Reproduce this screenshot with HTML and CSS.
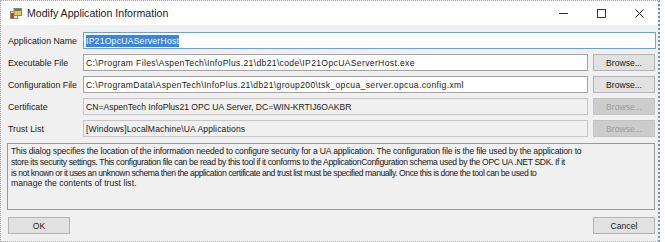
FILE: index.html
```html
<!DOCTYPE html>
<html lang="en">
<head>
  <meta charset="UTF-8" />
  <title>Modify Application Information</title>
  <link rel="stylesheet" href="styles.css">
</head>
<body>
  <div class="ventana">
    <div class="barra-titulo">
      <svg class="icono" width="12" height="11" viewBox="0 0 12 11">
        <rect x="0.5" y="3.5" width="7" height="7" fill="#e8e8e8" stroke="#8a8a8a"/>
        <rect x="1" y="5" width="3" height="5" fill="#d9342b"/>
        <rect x="4" y="0.5" width="7.5" height="7" fill="#f3c53a" stroke="#a88420"/>
        <rect x="4.5" y="1" width="6.5" height="2" fill="#3a7bd5"/>
      </svg>
      <span class="titulo">Modify Application Information</span>
      <div class="controles">
        <span class="ctrl-min"></span>
        <span class="ctrl-max"></span>
        <svg class="ctrl-cerrar" width="9" height="9" viewBox="0 0 9 9">
          <path d="M0.5 0.5 L8.5 8.5 M8.5 0.5 L0.5 8.5" stroke="#222" stroke-width="1"/>
        </svg>
      </div>
    </div>

    <div class="cuerpo">
      <div class="campos">
        <label class="etiqueta">Application Name</label>
        <div class="caja caja-foco ancha"><span class="seleccion">IP21OpcUAServerHost</span></div>

        <label class="etiqueta">Executable File</label>
        <div class="caja ruta">C:\Program Files\AspenTech\InfoPlus.21\db21\code\IP21OpcUAServerHost.exe</div>
        <button class="boton">Browse...</button>

        <label class="etiqueta">Configuration File</label>
        <div class="caja ruta">C:\ProgramData\AspenTech\InfoPlus.21\db21\group200\tsk_opcua_server.opcua.config.xml</div>
        <button class="boton">Browse...</button>

        <label class="etiqueta">Certificate</label>
        <div class="caja caja-off">CN=AspenTech InfoPlus21 OPC UA Server, DC=WIN-KRTIJ6OAKBR</div>
        <button class="boton boton-off">Browse...</button>

        <label class="etiqueta">Trust List</label>
        <div class="caja caja-off lista">[Windows]LocalMachine\UA Applications</div>
        <button class="boton boton-off">Browse...</button>
      </div>

      <div class="descripcion">
        <div class="linea l1">This dialog specifies the location of the information needed to configure security for a UA application. The configuration file is the file used by the application to</div>
        <div class="linea l2">store its security settings. This configuration file can be read by this tool if it conforms to the ApplicationConfiguration schema used by the OPC UA .NET SDK. If it</div>
        <div class="linea l3">is not known or it uses an unknown schema then the application certificate and trust list must be specified manually. Once this is done the tool can be used to</div>
        <div class="linea l4">manage the contents of trust list.</div>
      </div>

      <div class="acciones">
        <button class="boton boton-grande">OK</button>
        <button class="boton boton-grande">Cancel</button>
      </div>
    </div>
  </div>
</body>
</html>
```

FILE: styles.css
```css
body {
  margin: 0;
  padding: 0;
  background-color: white;
  font-family: 'Liberation Sans', Arial, sans-serif;
}

.ventana {
  width: 657px;
  height: 240px;
  border: 1px dotted #a8a8a8;
  border-right: 2px dotted #5b8fd6;
  background-color: #f0f0f0;
  display: flex;
  flex-direction: column;
}

.barra-titulo {
  height: 24px;
  background-color: white;
  display: flex;
  align-items: center;
}

.icono {
  margin-left: 9px;
  margin-right: 5px;
}

.titulo {
  font-size: 10.6px;
  color: #222;
}

.controles {
  margin-left: auto;
  display: flex;
  align-items: center;
  height: 100%;
}

.ctrl-min {
  width: 9px;
  height: 1px;
  background-color: #333;
  margin-right: 29px;
}

.ctrl-max {
  width: 7px;
  height: 7px;
  border: 1px solid #333;
  margin-right: 29px;
}

.ctrl-cerrar {
  margin-right: 14px;
}

.cuerpo {
  flex: 1;
  padding: 7px 3px 0 5px;
  display: flex;
  flex-direction: column;
}

.campos {
  display: grid;
  grid-template-columns: 70px 1fr 62px;
  grid-auto-rows: 17px;
  column-gap: 5px;
  row-gap: 5px;
  padding-left: 2px;
  font-size: 8.8px;
}

.etiqueta {
  display: flex;
  align-items: center;
  color: #1a1a1a;
}

.caja {
  box-sizing: border-box;
  background-color: white;
  border: 1px solid #a3a3a3;
  padding: 0 2px;
  display: flex;
  align-items: center;
  white-space: nowrap;
  overflow: hidden;
  color: #1a1a1a;
  font-size: 8.6px;
}

.ruta {
  letter-spacing: 0.34px;
}

.lista {
  letter-spacing: 0.12px;
}

.ancha {
  grid-column: 2 / 4;
  margin-right: -1px;
}

.caja-foco {
  border-color: #6f9ede;
}

.seleccion {
  background-color: #3a86df;
  color: white;
  padding: 1px 0;
  letter-spacing: 0.25px;
}

.caja-off {
  background-color: #f0f0f0;
  border-color: #c6c6c6;
}

.boton {
  box-sizing: border-box;
  font-family: inherit;
  font-size: 8.6px;
  color: #1a1a1a;
  background-color: #e1e1e1;
  border: 1px solid #b4b4b4;
  padding: 0;
  margin: 0;
}

.boton-off {
  background-color: #cccccc;
  border-color: #c2c2c2;
  color: #9d9d9d;
}

.descripcion {
  box-sizing: border-box;
  margin-top: 6px;
  margin-left: 1px;
  height: 67px;
  border: 1px solid #9a9a9a;
  padding: 2px 3px;
  font-size: 8.6px;
  line-height: 10.8px;
  color: #1a1a1a;
  white-space: nowrap;
}

.l1 { letter-spacing: -0.18px; }
.l2 { letter-spacing: -0.36px; }
.l3 { letter-spacing: -0.45px; }
.l4 { letter-spacing: 0.04px; }

.acciones {
  display: flex;
  justify-content: space-between;
  margin-top: 7px;
  padding-left: 2px;
}

.boton-grande {
  width: 62px;
  height: 17px;
}
```
